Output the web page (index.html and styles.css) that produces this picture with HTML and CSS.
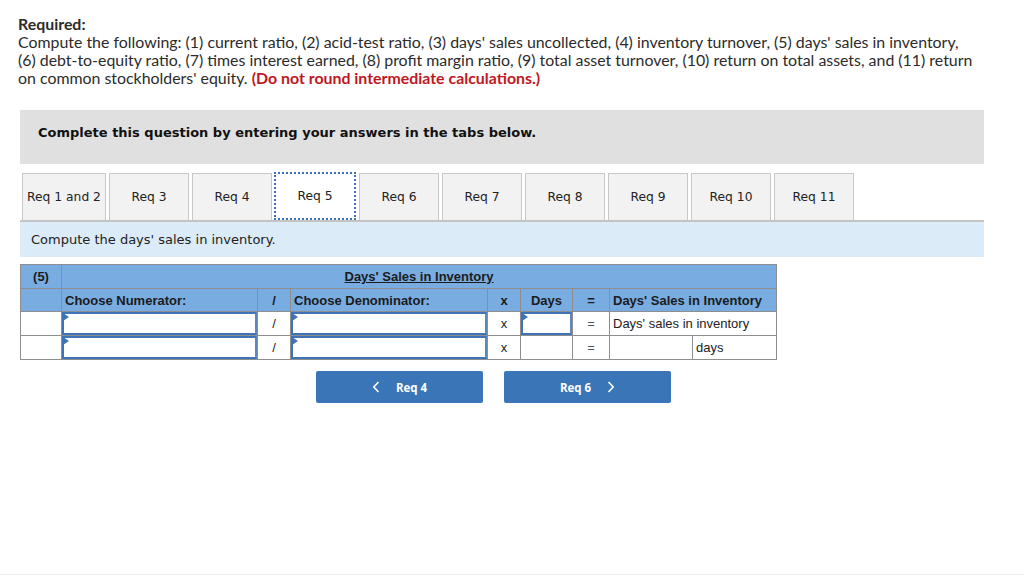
FILE: index.html
```html
<!DOCTYPE html>
<html lang="en">
<head>
  <meta charset="UTF-8" />
  <title>Req 5 - Days' Sales in Inventory</title>
  <link rel="stylesheet" href="styles.css">
</head>
<body>
  <div class="page">
    <div class="required">
      <strong>Required:</strong><br>
      Compute the following: (1) current ratio, (2) acid-test ratio, (3) days' sales uncollected, (4) inventory turnover, (5) days' sales in inventory,<br>
      (6) debt-to-equity ratio, (7) times interest earned, (8) profit margin ratio, (9) total asset turnover, (10) return on total assets, and (11) return<br>
      on common stockholders' equity. <span class="warn">(Do not round intermediate calculations.)</span>
    </div>

    <div class="instruct">Complete this question by entering your answers in the tabs below.</div>

    <div class="tabs">
      <div class="tab first">Req 1 and 2</div>
      <div class="tab">Req 3</div>
      <div class="tab">Req 4</div>
      <div class="tab active">Req 5</div>
      <div class="tab">Req 6</div>
      <div class="tab">Req 7</div>
      <div class="tab">Req 8</div>
      <div class="tab">Req 9</div>
      <div class="tab">Req 10</div>
      <div class="tab">Req 11</div>
    </div>

    <div class="prompt">Compute the days' sales in inventory.</div>

    <table class="calc">
      <colgroup>
        <col class="c-num"><col class="c-frac"><col class="c-op"><col class="c-frac2"><col class="c-op"><col class="c-days"><col class="c-eq"><col class="c-res1"><col class="c-res2">
      </colgroup>
      <tr class="head">
        <th class="center">(5)</th>
        <th colspan="8" class="center"><u>Days' Sales in Inventory</u></th>
      </tr>
      <tr class="head">
        <th></th>
        <th>Choose Numerator:</th>
        <th class="center">/</th>
        <th>Choose Denominator:</th>
        <th class="center">x</th>
        <th class="center">Days</th>
        <th class="center eq">=</th>
        <th colspan="2">Days' Sales in Inventory</th>
      </tr>
      <tr>
        <td></td>
        <td class="in"><div class="box"></div></td>
        <td class="center">/</td>
        <td class="in"><div class="box"></div></td>
        <td class="center">x</td>
        <td class="in"><div class="box"></div></td>
        <td class="center eq">=</td>
        <td colspan="2">Days' sales in inventory</td>
      </tr>
      <tr>
        <td></td>
        <td class="in"><div class="box"></div></td>
        <td class="center">/</td>
        <td class="in"><div class="box"></div></td>
        <td class="center">x</td>
        <td></td>
        <td class="center eq">=</td>
        <td></td>
        <td>days</td>
      </tr>
    </table>

    <div class="nav">
      <button class="btn">
        <svg class="chev" width="8" height="12" viewBox="0 0 8 12"><path d="M6.5 1 L1.8 6 L6.5 11" fill="none" stroke="#fff" stroke-width="1.6"/></svg>
        Req 4
      </button>
      <button class="btn">
        Req 6
        <svg class="chev right" width="8" height="12" viewBox="0 0 8 12"><path d="M1.5 1 L6.2 6 L1.5 11" fill="none" stroke="#fff" stroke-width="1.6"/></svg>
      </button>
    </div>
  </div>
  <div class="footline"></div>
</body>
</html>
```

FILE: styles.css
```css
html, body {
  margin: 0;
  padding: 0;
  background: #fff;
}
body {
  width: 1024px;
  height: 577px;
  position: relative;
  overflow: hidden;
}
.page {
  padding: 15px 40px 0 20px;
}
.required {
  font-family: Lato, "Open Sans", sans-serif;
  font-size: 15.9px;
  line-height: 18px;
  color: #2b2b2b;
  margin-left: -2px;
  white-space: nowrap;
}
.required strong {
  font-weight: 700;
}
.warn {
  color: #c0171e;
  font-weight: 700;
}
.instruct {
  margin-top: 23px;
  background: #e0e0e0;
  height: 54px;
  box-sizing: border-box;
  padding: 15px 18px;
  font-family: "DejaVu Sans", Verdana, sans-serif;
  font-weight: bold;
  font-size: 13px;
  color: #111;
}
.tabs {
  display: flex;
  gap: 3px;
  margin-top: 9px;
  padding-left: 2px;
  border-bottom: 2px solid #c4c4c4;
}
.tab {
  width: 78px;
  height: 46px;
  background: #f2f2f2;
  border: 1px solid #c8c8c8;
  border-bottom: none;
  display: flex;
  align-items: center;
  justify-content: center;
  font-family: "DejaVu Sans", Verdana, sans-serif;
  font-size: 12.3px;
  color: #222;
}
.tab.first {
  width: 82px;
}
.tab.active {
  background: #fff;
  border: 2px dotted #3d72b8;
  box-sizing: border-box;
  width: 82px;
  height: 48px;
  margin: -1px 0 -1px -1px;
}
.prompt {
  background: #dbebf8;
  height: 35px;
  box-sizing: border-box;
  padding: 10px 11px;
  font-family: "DejaVu Sans", Verdana, sans-serif;
  font-size: 13px;
  color: #222;
}
.calc {
  margin-top: 7px;
  border-collapse: collapse;
  table-layout: fixed;
  width: 757px;
  font-family: "Liberation Sans", Arial, sans-serif;
  font-size: 13px;
  color: #222;
}
.calc col.c-num { width: 41px; }
.calc col.c-frac { width: 196px; }
.calc col.c-op { width: 33px; }
.calc col.c-frac2 { width: 197px; }
.calc col.c-days { width: 52px; }
.calc col.c-eq { width: 37px; }
.calc col.c-res1 { width: 83px; }
.calc col.c-res2 { width: 84px; }
.calc th, .calc td {
  border: 1px solid #8e8e8e;
  padding: 0 3px;
  text-align: left;
  height: 22px;
}
.calc th {
  font-weight: bold;
}
.calc tr.head th {
  background: #79ade1;
  color: #1b1b1b;
}
.calc tr.head:first-child th {
  height: 23px;
}
.calc .center {
  text-align: center;
}
.calc .eq {
  color: #555;
}
.calc td.in {
  padding: 0;
}
.box {
  position: relative;
  height: 19px;
  border: 2px solid #3e73b7;
  border-color: #3e73b7 #5c87bf #3e73b7 #3e73b7;
  background: #fff;
}
.box::before {
  content: "";
  position: absolute;
  left: -1px;
  top: -1px;
  border-left: 6px solid #3e73b7;
  border-top: 4px solid transparent;
  border-bottom: 4px solid transparent;
}
.nav {
  display: flex;
  gap: 21px;
  margin-top: 11px;
  padding-left: 296px;
}
.btn {
  width: 167px;
  height: 32px;
  background: #3975b7;
  border: none;
  border-radius: 2px;
  color: #fff;
  font-family: "Open Sans", "DejaVu Sans", sans-serif;
  font-weight: 700;
  font-size: 11.5px;
  display: flex;
  align-items: center;
  justify-content: center;
  padding: 0;
}
.chev {
  margin-right: 16px;
}
.chev.right {
  margin-right: 0;
  margin-left: 16px;
}
.footline {
  position: absolute;
  left: 0;
  right: 0;
  bottom: 2px;
  height: 1px;
  background: #ececec;
}
```
